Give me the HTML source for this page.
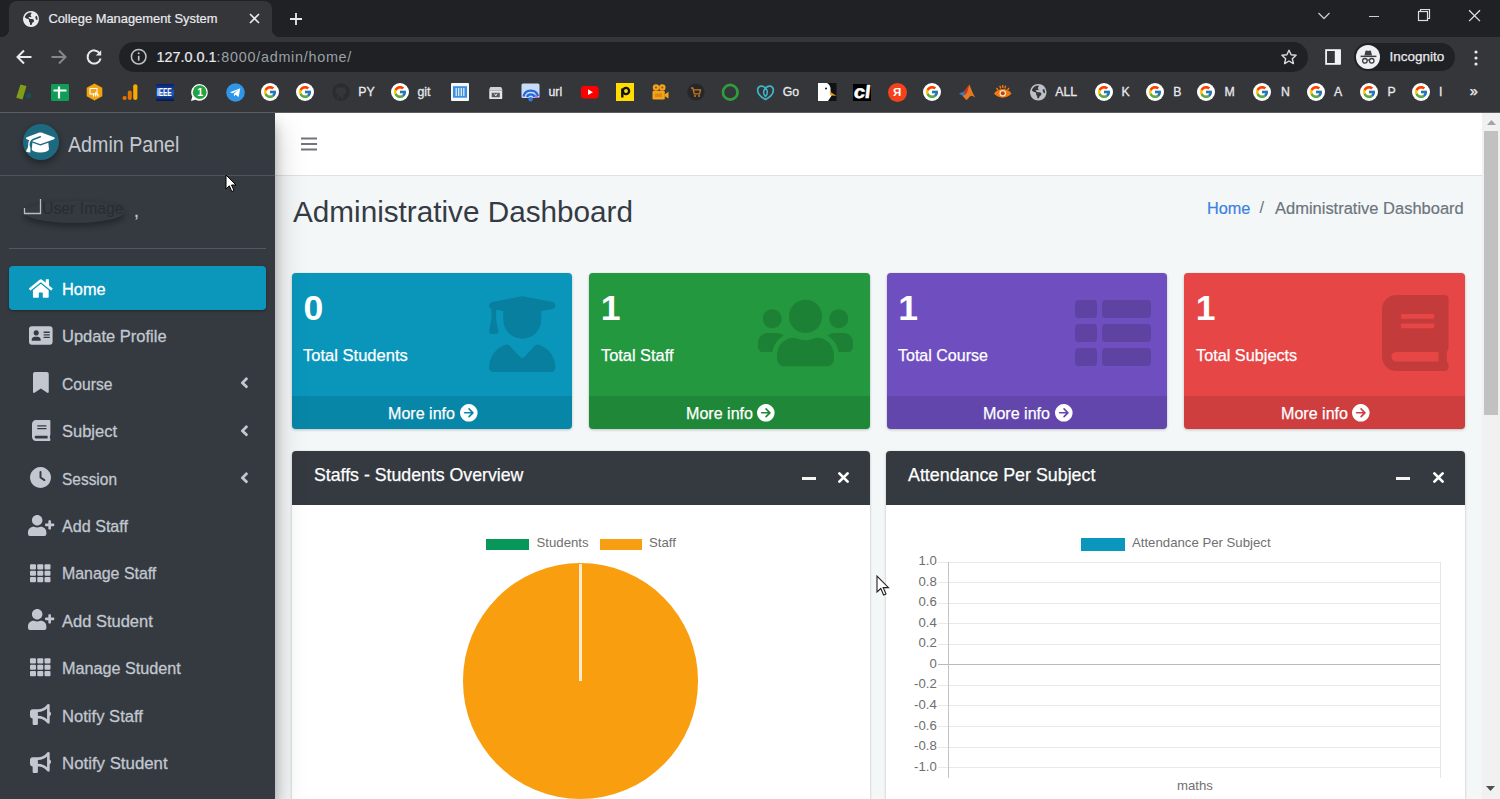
<!DOCTYPE html>
<html lang="en"><head><meta charset="utf-8"><title>College Management System</title>
<style>
*{box-sizing:border-box;margin:0;padding:0}
html,body{width:1500px;height:799px;overflow:hidden;background:#f4f7f8;font-family:"Liberation Sans",sans-serif;position:relative}
.ic{position:absolute;display:block;overflow:visible}
.a{position:absolute;display:block}
.t{position:absolute;white-space:nowrap;line-height:1;display:block}
#chrome{position:absolute;left:0;top:0;width:1500px;height:113px;background:#35363a;z-index:30}
#tabbar{position:absolute;left:0;top:0;width:1500px;height:37px;background:#202124}
#tab{position:absolute;left:9px;top:1px;width:263px;height:36px;background:#35363a;border-radius:8px 8px 0 0}
#omni{position:absolute;left:119px;top:42px;width:1189px;height:30px;border-radius:15px;background:#202124}
#incog{position:absolute;left:1354px;top:43px;width:101px;height:28px;border-radius:14px;background:#202124}
#cline{position:absolute;left:0;top:112px;width:1500px;height:1px;background:#5b5e62}
#sidebar{position:absolute;left:0;top:113px;width:274.600px;height:686px;background:#343a40;z-index:20;box-shadow:0 14px 28px rgba(0,0,0,.25),0 10px 10px rgba(0,0,0,.22)}
#main{position:absolute;left:275px;top:113px;width:1207px;height:686px;background:#f4f7f8;z-index:10;overflow:hidden}
#navbar{position:absolute;left:0;top:0;width:1207px;height:63px;background:#fff;border-bottom:1px solid #dee2e6}
#sbar{position:absolute;left:1482px;top:113px;width:18px;height:686px;background:#f1f1f1;z-index:25}
.box{position:absolute;top:160.300px;width:280.500px;height:156px;border-radius:4px;box-shadow:0 0 1px rgba(0,0,0,.125),0 1px 3px rgba(0,0,0,.2);overflow:hidden}
.box .ft{position:absolute;left:0;bottom:0;width:100%;height:33px;background:rgba(0,0,0,.1)}
.card{position:absolute;top:338px;width:578.500px;height:400px;border-radius:4px;background:#fff;box-shadow:0 0 1px rgba(0,0,0,.125),0 1px 3px rgba(0,0,0,.2);overflow:hidden}
.card .hd{position:absolute;left:0;top:0;width:100%;height:53.500px;background:#343a40}
.nav-act{position:absolute;left:9px;top:153.300px;width:257px;height:44px;border-radius:4px;background:#0b97bc;box-shadow:0 1px 3px rgba(0,0,0,.12),0 1px 2px rgba(0,0,0,.24)}

</style></head>
<body>
<div id="chrome"><div id="tabbar"></div><div id="tab"></div>
<div class="a" style="left:1px;top:29px;width:8px;height:8px;background:radial-gradient(circle at 0 0,#202124 8px,#35363a 8.5px)"></div>
<div class="a" style="left:272px;top:29px;width:8px;height:8px;background:radial-gradient(circle at 100% 0,#202124 8px,#35363a 8.5px)"></div>
<svg class="ic" style="left:23px;top:10.5px;width:16.00px;height:16px" viewBox="0 0 512 512" ><path fill="#e8eaed" d="M58 193 67 209 58 193 67 209Q80 232 105 239L163 256Q190 265 192 294V334Q193 352 208 360Q223 368 224 386V425Q224 437 233 444Q242 450 254 448Q279 439 287 414L289 403Q296 376 320 363L328 358Q351 344 352 316V308Q352 288 338 274L334 270Q320 256 300 256H257Q240 256 225 248L191 228Q184 224 182 217Q177 201 192 192L198 189Q208 184 219 188L242 195Q256 199 264 188Q271 176 263 165L249 149Q234 128 249 108L265 89Q279 72 269 52L266 48Q261 48 256 48Q185 49 132 89Q79 129 58 193ZM464 256Q463 200 438 155L412 165Q400 170 395 181Q390 192 394 205L410 255Q416 272 433 276L462 284Q464 270 464 256ZM0 256Q1 186 34 128Q68 70 128 34Q189 0 256 0Q323 0 384 34Q444 70 478 128Q511 186 512 256Q511 326 478 384Q444 442 384 478Q323 512 256 512Q189 512 128 478Q68 442 34 384Q1 326 0 256Z"/></svg>
<span class="t" style="left:48.4px;top:12.98px;font-size:12.9px;color:#e8eaed;-webkit-text-stroke:.2px #e8eaed;">College Management System</span>
<svg class="ic" style="left:249px;top:13px;width:11px;height:11px" viewBox="0 0 11 11"><path d="M1 1L10 10M10 1L1 10" stroke="#e8eaed" stroke-width="1.6" fill="none"/></svg>
<svg class="ic" style="left:289px;top:11.500px;width:14px;height:14px" viewBox="0 0 14 14"><path d="M7 1V13M1 7H13" stroke="#e8eaed" stroke-width="1.8" fill="none"/></svg>
<svg class="ic" style="left:1316.500px;top:10.500px;width:14px;height:10px" viewBox="0 0 14 10"><path d="M1.500 2L7 7.500L12.500 2" stroke="#c7c8ca" stroke-width="1.3" fill="none"/></svg>
<div class="a" style="left:1368.500px;top:15.500px;width:10.700px;height:1px;background:#d0d1d3"></div>
<svg class="ic" style="left:1417px;top:8.300px;width:14px;height:14px" viewBox="0 0 14 14"><rect x="1.500" y="3.500" width="9" height="9" fill="none" stroke="#dedfe0" stroke-width="1.200"/><path d="M3.500 3.500V1.500H12.500V10.500H10.500" fill="none" stroke="#dedfe0" stroke-width="1.200"/></svg>
<svg class="ic" style="left:1467.400px;top:7.900px;width:15px;height:15px" viewBox="0 0 15 15"><path d="M2.100 2.200L13 13.100M13 2.200L2.100 13.100" stroke="#dedfe0" stroke-width="1.300" fill="none"/></svg>
<svg class="ic" style="left:15px;top:48px;width:18px;height:18px" viewBox="0 0 18 18"><path d="M16.500 9H3M9 2.500L2.500 9L9 15.500" stroke="#e8eaed" stroke-width="2" fill="none"/></svg>
<svg class="ic" style="left:50px;top:48px;width:18px;height:18px" viewBox="0 0 18 18"><path d="M1.500 9H15M9 2.500L15.500 9L9 15.500" stroke="#85878a" stroke-width="2" fill="none"/></svg>
<svg class="ic" style="left:85px;top:48px;width:18px;height:18px" viewBox="0 0 18 18"><path d="M14.600 5.200A6.600 6.600 0 1 0 15.600 10.500" stroke="#e8eaed" stroke-width="2" fill="none"/><path d="M16.200 2.200V7.600H10.800z" fill="#e8eaed"/></svg>
<div id="omni"></div>
<svg class="ic" style="left:129.800px;top:48.400px;width:17.400px;height:17.400px" viewBox="0 0 16 16"><circle cx="8" cy="8" r="6.700" fill="none" stroke="#bfc1c4" stroke-width="1.400"/><path d="M8 7.200V11.600" stroke="#c4c5c7" stroke-width="1.500"/><circle cx="8" cy="4.900" r=".9" fill="#c4c5c7"/></svg>
<span class="t" style="left:156.6px;top:50.11px;font-size:14.4px;color:#e8eaed;-webkit-text-stroke:.2px #e8eaed;">127.0.0.1<span style="color:#9aa0a6;-webkit-text-stroke:0;letter-spacing:.72px">:8000/admin/home/</span></span>
<svg class="ic" style="left:1280px;top:48px;width:18px;height:18px" viewBox="0 0 18 18"><path d="M9 2.200L11.100 6.800L16.100 7.300L12.300 10.700L13.400 15.600L9 13L4.600 15.600L5.700 10.700L1.900 7.300L6.900 6.800z" fill="none" stroke="#dadce0" stroke-width="1.400" stroke-linejoin="round"/></svg>
<svg class="ic" style="left:1325px;top:49px;width:16px;height:16px" viewBox="0 0 16 16"><rect x="1.100" y="1.100" width="13.800" height="13.800" fill="none" stroke="#f1f3f4" stroke-width="1.800"/><rect x="9.800" y="1" width="6" height="14" fill="#f1f3f4"/></svg>
<div id="incog"></div>
<div class="a" style="left:1355.700px;top:44.700px;width:24.800px;height:24.800px;border-radius:50%;background:#eef0f2"></div>
<svg class="ic" style="left:1359px;top:48px;width:18px;height:18px" viewBox="0 0 18 18"><path d="M5.400 7.600L6.400 3.200C6.500 2.600 7.100 2.300 7.600 2.500L9.200 3L10.800 2.500C11.300 2.300 11.900 2.600 12 3.200L13 7.600z" fill="#3c4043"/><rect x="1.600" y="7.600" width="15.800" height="1.500" fill="#3c4043"/><circle cx="5.900" cy="12.800" r="2.300" fill="none" stroke="#3c4043" stroke-width="1.300"/><circle cx="12.700" cy="12.800" r="2.300" fill="none" stroke="#3c4043" stroke-width="1.300"/><path d="M8.200 12.300Q9.300 11.500 10.400 12.300" fill="none" stroke="#3c4043" stroke-width="1.100"/></svg>
<span class="t" style="left:1389.4px;top:50.37px;font-size:13.5px;color:#e8eaed;-webkit-text-stroke:.25px #e8eaed;">Incognito</span>
<svg class="ic" style="left:1474.300px;top:49.700px;width:4px;height:16px" viewBox="0 0 4 16"><circle cx="2" cy="2" r="1.600" fill="#e8eaed"/><circle cx="2" cy="8" r="1.600" fill="#e8eaed"/><circle cx="2" cy="14" r="1.600" fill="#e8eaed"/></svg>
<svg class="ic" style="left:15px;top:83px;width:19px;height:18px" viewBox="0 0 19 18"><path d="M5.500 1.500L11.500 3L7.500 16.500L1.200 14.800z" fill="#7f9d17"/><rect x="11.200" y="10.500" width="5" height="4.600" fill="#12515c"/></svg>
<svg class="ic" style="left:50.500px;top:83.500px;width:18px;height:17px" viewBox="0 0 18 17"><rect width="18" height="17" rx="1.200" fill="#0f9d58"/><path d="M8 2.500V14.500M2.500 6.500H15.500" stroke="#fff" stroke-width="2.200"/></svg>
<svg class="ic" style="left:86px;top:83px;width:17px;height:18px" viewBox="0 0 17 18"><path d="M8.500 .5L16.300 4.800V13.200L8.500 17.500L.7 13.200V4.800z" fill="#f2a30f"/><rect x="4" y="5.500" width="7" height="5.500" fill="none" stroke="#fff" stroke-width="1.100"/><path d="M7.500 13.500V10.500M9.700 13.500V9M11.900 13.500V11" stroke="#fff" stroke-width="1.200"/></svg>
<svg class="ic" style="left:122px;top:83px;width:16px;height:18px" viewBox="0 0 16 18"><circle cx="2.600" cy="15" r="2.100" fill="#e37400"/><rect x="5.800" y="7.500" width="4" height="9.600" rx="2" fill="#e37400"/><rect x="11.200" y="1.200" width="4.200" height="15.900" rx="2.100" fill="#f9ab00"/></svg>
<div class="a" style="left:156px;top:83.500px;width:18px;height:17px;background:linear-gradient(180deg,#0a1f6b,#1d5cc4 55%,#061548)"></div>
<span class="t" style="left:157.1px;top:86.89px;font-size:11px;color:#fff;font-weight:700;letter-spacing:-0.2px;transform:scaleX(.6);transform-origin:0 50%;">IEEE</span>
<svg class="ic" style="left:190px;top:82.500px;width:19px;height:19px" viewBox="0 0 19 19"><path d="M1 18L2.300 13.600A8.300 8.300 0 1 1 5.500 16.700z" fill="#fff"/><circle cx="9.700" cy="9.200" r="6.900" fill="#25a244"/></svg>
<span class="t" style="left:197.2px;top:86.81px;font-size:10.5px;color:#fff;font-weight:700;">1</span>
<svg class="ic" style="left:225.500px;top:82.500px;width:19px;height:19px" viewBox="0 0 19 19"><circle cx="9.500" cy="9.500" r="9.300" fill="#2f96e8"/><path d="M4 9.300L14.300 5.300L12.600 13.900L9.600 11.700L8 13.200L7.800 10.700L12.300 6.700L6.700 10.300z" fill="#fff"/></svg>
<svg class="ic" style="left:261px;top:83px;width:18px;height:18px" viewBox="0 0 48 48"><circle cx="24" cy="24" r="24" fill="#fff"/><g transform="translate(24 24) scale(.8) translate(-24 -24)"><path fill="#FFC107" d="M43.6 20.1H42V20H24v8h11.3c-1.6 4.7-6.1 8-11.3 8-6.6 0-12-5.4-12-12s5.4-12 12-12c3.1 0 5.800 1.200 8 3l5.700-5.700C34 6.100 29.300 4 24 4 13 4 4 13 4 24s9 20 20 20 20-9 20-20c0-1.300-.1-2.700-.4-3.900z"/><path fill="#FF3D00" d="M6.300 14.700l6.600 4.800C14.700 15.100 19 12 24 12c3.100 0 5.800 1.200 8 3l5.700-5.700C34 6.100 29.300 4 24 4 16.300 4 9.700 8.300 6.300 14.700z"/><path fill="#4CAF50" d="M24 44c5.200 0 9.900-2 13.400-5.200l-6.200-5.200C29.200 35.100 26.700 36 24 36c-5.200 0-9.600-3.300-11.300-7.900l-6.500 5C9.500 39.600 16.200 44 24 44z"/><path fill="#1976D2" d="M43.600 20.100H42V20H24v8h11.300c-.8 2.200-2.200 4.200-4.100 5.600l6.200 5.200C37 39.200 44 34 44 24c0-1.300-.1-2.700-.4-3.900z"/></g></svg>
<svg class="ic" style="left:296.3px;top:83px;width:18px;height:18px" viewBox="0 0 48 48"><circle cx="24" cy="24" r="24" fill="#fff"/><g transform="translate(24 24) scale(.8) translate(-24 -24)"><path fill="#FFC107" d="M43.6 20.1H42V20H24v8h11.3c-1.6 4.7-6.1 8-11.3 8-6.6 0-12-5.4-12-12s5.4-12 12-12c3.1 0 5.800 1.200 8 3l5.700-5.700C34 6.100 29.300 4 24 4 13 4 4 13 4 24s9 20 20 20 20-9 20-20c0-1.300-.1-2.700-.4-3.900z"/><path fill="#FF3D00" d="M6.300 14.700l6.600 4.800C14.700 15.100 19 12 24 12c3.100 0 5.800 1.200 8 3l5.700-5.700C34 6.100 29.300 4 24 4 16.300 4 9.700 8.300 6.300 14.700z"/><path fill="#4CAF50" d="M24 44c5.200 0 9.900-2 13.400-5.200l-6.200-5.200C29.200 35.100 26.700 36 24 36c-5.200 0-9.600-3.300-11.300-7.900l-6.500 5C9.500 39.600 16.200 44 24 44z"/><path fill="#1976D2" d="M43.600 20.100H42V20H24v8h11.300c-.8 2.200-2.200 4.200-4.100 5.600l6.200 5.200C37 39.200 44 34 44 24c0-1.300-.1-2.700-.4-3.900z"/></g></svg>
<svg class="ic" style="left:332px;top:83px;width:18px;height:18px" viewBox="0 0 18 18"><circle cx="9" cy="9" r="8.700" fill="#2b2c30"/><path d="M6.800 16.500V13.500C4.500 14 4 12.500 4 12.500M11.200 16.500V13C11.200 12 10.800 11.600 10.800 11.600C13 11.300 14 10.200 14 8.200C14 7.300 13.700 6.600 13.200 6.100C13.300 5.600 13.400 4.900 13.100 4.200C13.100 4.200 12.300 4 10.900 5A7 7 0 0 0 7.100 5C5.700 4 4.900 4.200 4.900 4.200C4.600 4.900 4.700 5.600 4.800 6.100C4.300 6.600 4 7.300 4 8.200C4 10.200 5 11.300 7.200 11.600C7.200 11.600 6.800 12 6.800 12.800" fill="#35363a" stroke="#35363a" stroke-width=".6"/></svg>
<span class="t" style="left:358.3px;top:86.39px;font-size:12.3px;color:#e8eaed;-webkit-text-stroke:.3px #e8eaed;">PY</span>
<svg class="ic" style="left:390.5px;top:83px;width:18px;height:18px" viewBox="0 0 48 48"><circle cx="24" cy="24" r="24" fill="#fff"/><g transform="translate(24 24) scale(.8) translate(-24 -24)"><path fill="#FFC107" d="M43.6 20.1H42V20H24v8h11.3c-1.6 4.7-6.1 8-11.3 8-6.6 0-12-5.4-12-12s5.4-12 12-12c3.1 0 5.800 1.200 8 3l5.700-5.700C34 6.100 29.300 4 24 4 13 4 4 13 4 24s9 20 20 20 20-9 20-20c0-1.300-.1-2.700-.4-3.900z"/><path fill="#FF3D00" d="M6.300 14.700l6.600 4.800C14.700 15.100 19 12 24 12c3.100 0 5.800 1.200 8 3l5.700-5.700C34 6.100 29.300 4 24 4 16.300 4 9.700 8.300 6.300 14.700z"/><path fill="#4CAF50" d="M24 44c5.200 0 9.900-2 13.400-5.200l-6.200-5.200C29.200 35.100 26.700 36 24 36c-5.200 0-9.600-3.300-11.300-7.900l-6.500 5C9.500 39.600 16.200 44 24 44z"/><path fill="#1976D2" d="M43.600 20.100H42V20H24v8h11.300c-.8 2.200-2.200 4.200-4.100 5.600l6.200 5.200C37 39.200 44 34 44 24c0-1.300-.1-2.700-.4-3.900z"/></g></svg>
<span class="t" style="left:417.5px;top:86.39px;font-size:12.3px;color:#e8eaed;-webkit-text-stroke:.3px #e8eaed;">git</span>
<svg class="ic" style="left:451px;top:83px;width:18px;height:18px" viewBox="0 0 18 18"><rect width="18" height="18" rx="1" fill="#f4f8fc"/><rect x="2" y="3.200" width="14" height="11.500" fill="#3d8fe0"/><path d="M5.200 5V13M7.700 5V13M10.300 5V13M12.800 5V13" stroke="#eaf3fb" stroke-width="1.200"/></svg>
<svg class="ic" style="left:488px;top:86px;width:15.500px;height:13.500px" viewBox="0 0 17 15"><path d="M2.500 1H14.500L16.300 5H.7z" fill="#cfd3d8"/><rect x="1.300" y="5" width="14.400" height="9.500" rx="1" fill="#e4e7ea"/><rect x="4" y="7.500" width="9" height="5" fill="#55595f"/><path d="M7 8.500L8.500 11L10 8.500" stroke="#e4e7ea" stroke-width="1.100" fill="none"/></svg>
<svg class="ic" style="left:521px;top:83px;width:19px;height:19px" viewBox="0 0 19 19"><rect x=".5" y=".5" width="18" height="14.500" rx="1.500" fill="#c9dcf7"/><path d="M2.500 13.500A7.500 7.500 0 0 1 17 13" stroke="#2569d8" stroke-width="2.400" fill="none"/><path d="M6 14A4 4 0 0 1 13.500 14" stroke="#2569d8" stroke-width="2.200" fill="none"/><circle cx="9.600" cy="16.200" r="2.200" fill="#2f7be6"/><path d="M14 11L18.500 15H14z" fill="#b46fe0"/></svg>
<span class="t" style="left:548.5px;top:86.39px;font-size:12.3px;color:#e8eaed;-webkit-text-stroke:.3px #e8eaed;">url</span>
<svg class="ic" style="left:581px;top:86px;width:17.600px;height:12.400px" viewBox="0 0 18 13.500" preserveAspectRatio="none"><rect width="18" height="13.500" rx="3.400" fill="#f00"/><path d="M7.200 3.600L12.200 6.750L7.200 9.900z" fill="#fff"/></svg>
<div class="a" style="left:615.500px;top:83px;width:18.500px;height:18px;background:#ffdd00"></div>
<svg class="ic" style="left:615.500px;top:83px;width:18.500px;height:18px" viewBox="0 0 18.500 18"><circle cx="10" cy="8" r="3.100" fill="none" stroke="#111" stroke-width="2.300"/><path d="M6.300 5.500V14.500" stroke="#111" stroke-width="2.400"/></svg>
<svg class="ic" style="left:651px;top:83px;width:18px;height:18px" viewBox="0 0 18 18"><circle cx="5" cy="4.500" r="3.200" fill="#f5a31d"/><circle cx="11.300" cy="4.500" r="3.200" fill="#f5a31d"/><rect x="1.500" y="7.800" width="12.300" height="8.700" rx="1.300" fill="#f5a31d"/><path d="M13.800 11.200L17.500 8.800V15.500L13.800 13.200z" fill="#f5a31d"/><circle cx="5" cy="4.500" r="1.100" fill="#8a5a10"/><circle cx="11.300" cy="4.500" r="1.100" fill="#8a5a10"/><rect x="4" y="10.500" width="7" height="3.500" fill="#d98612"/></svg>
<svg class="ic" style="left:686.500px;top:83px;width:18px;height:18px" viewBox="0 0 18 18"><circle cx="9" cy="9" r="8.600" fill="#26272a"/><path d="M4 5H5.800L7.300 10.800H12.500L13.500 6.800H6.500" stroke="#c87a1a" stroke-width="1.300" fill="none"/><circle cx="8" cy="13" r="1" fill="#c87a1a"/><circle cx="12" cy="13" r="1" fill="#c87a1a"/></svg>
<svg class="ic" style="left:721px;top:83px;width:18.500px;height:18.500px" viewBox="0 0 18.500 18.500"><circle cx="9.250" cy="9.250" r="7.300" fill="none" stroke="#2f9e3c" stroke-width="2.700"/></svg>
<svg class="ic" style="left:756px;top:83.500px;width:19px;height:17px" viewBox="0 0 19 17"><path d="M9.500 15.500C4 12.500 1.200 8.500 1.800 5C2.400 1.800 6.500 .8 9.500 4C12.500 .8 16.600 1.800 17.200 5C17.800 8.500 15 12.500 9.500 15.500z" fill="none" stroke="#3fb6c8" stroke-width="1.700"/><path d="M9.500 4C7 6.500 7 10 9.500 12.500C12 10 12 6.500 9.500 4z" fill="none" stroke="#3fb6c8" stroke-width="1.500"/></svg>
<span class="t" style="left:782.8px;top:86.39px;font-size:12.3px;color:#e8eaed;-webkit-text-stroke:.3px #e8eaed;">Go</span>
<svg class="ic" style="left:818px;top:83px;width:18.500px;height:18px" viewBox="0 0 18.500 18"><rect width="18.500" height="18" fill="#111"/><path d="M0 0H9C12 1.500 13 5 12.500 8L14 12L10 18H0z" fill="#fff"/><path d="M11.500 8.500L18.500 12.800L12.500 12.500z" fill="#e89a1c"/><circle cx="8" cy="5.500" r="1" fill="#111"/></svg>
<div class="a" style="left:852.500px;top:83.500px;width:18.500px;height:17.500px;background:#000"></div>
<span class="t" style="left:853.6px;top:83.06px;font-size:18px;color:#fff;font-weight:700;letter-spacing:-0.3px;transform:scaleX(1.12) skewX(-6deg);transform-origin:0 50%;-webkit-text-stroke:.5px #fff;">cl</span>
<div class="a" style="left:887.500px;top:82.500px;width:19px;height:19px;border-radius:50%;background:#f4431c"></div>
<span class="t" style="left:893px;top:86.57px;font-size:11.5px;color:#fff;font-weight:700;">Я</span>
<svg class="ic" style="left:923.2px;top:83px;width:18px;height:18px" viewBox="0 0 48 48"><circle cx="24" cy="24" r="24" fill="#fff"/><g transform="translate(24 24) scale(.8) translate(-24 -24)"><path fill="#FFC107" d="M43.6 20.1H42V20H24v8h11.3c-1.6 4.7-6.1 8-11.3 8-6.6 0-12-5.4-12-12s5.4-12 12-12c3.1 0 5.800 1.200 8 3l5.700-5.700C34 6.100 29.300 4 24 4 13 4 4 13 4 24s9 20 20 20 20-9 20-20c0-1.300-.1-2.700-.4-3.900z"/><path fill="#FF3D00" d="M6.300 14.700l6.600 4.800C14.700 15.100 19 12 24 12c3.100 0 5.800 1.200 8 3l5.700-5.700C34 6.100 29.300 4 24 4 16.300 4 9.700 8.300 6.300 14.700z"/><path fill="#4CAF50" d="M24 44c5.200 0 9.900-2 13.400-5.200l-6.200-5.200C29.200 35.100 26.700 36 24 36c-5.200 0-9.600-3.300-11.300-7.900l-6.500 5C9.500 39.600 16.200 44 24 44z"/><path fill="#1976D2" d="M43.600 20.100H42V20H24v8h11.300c-.8 2.200-2.200 4.200-4.100 5.600l6.200 5.200C37 39.200 44 34 44 24c0-1.300-.1-2.700-.4-3.900z"/></g></svg>
<svg class="ic" style="left:958px;top:83px;width:18px;height:18px" viewBox="0 0 18 18"><path d="M1 10.500L5.500 8.500L8 11L4.500 12.800z" fill="#3b78c4"/><path d="M5.500 8.500C8 6.500 9.500 3 11.300 1.500L12.500 9L8 11z" fill="#c0392b"/><path d="M11.300 1.500C13 5 14.500 10.500 17.300 14.500C15 13.500 13.500 12 12 13.500C10.500 15 9.500 16.500 8.200 17L4.500 12.800L8 11C10 8.500 10.500 4.500 11.300 1.500z" fill="#e8791e"/></svg>
<svg class="ic" style="left:992.500px;top:83px;width:19.500px;height:18px" viewBox="0 0 19.500 18"><path d="M1 10.500C5 4.500 14.500 4.500 18.500 10.500C14.500 16 5 16 1 10.500z" fill="#ee7a10"/><circle cx="9.750" cy="10.300" r="3.300" fill="#fbe3c0"/><circle cx="9.750" cy="10.300" r="2" fill="#c43d0d"/><path d="M3.500 5L5 7M6.800 2.800L7.800 5.500M9.750 2V5M12.700 2.800L11.700 5.500M16 5L14.500 7" stroke="#ee7a10" stroke-width="1.400"/></svg>
<svg class="ic" style="left:1029.5px;top:84px;width:16.50px;height:16.5px" viewBox="0 0 512 512" ><path fill="#bdc1c6" d="M58 193 67 209 58 193 67 209Q80 232 105 239L163 256Q190 265 192 294V334Q193 352 208 360Q223 368 224 386V425Q224 437 233 444Q242 450 254 448Q279 439 287 414L289 403Q296 376 320 363L328 358Q351 344 352 316V308Q352 288 338 274L334 270Q320 256 300 256H257Q240 256 225 248L191 228Q184 224 182 217Q177 201 192 192L198 189Q208 184 219 188L242 195Q256 199 264 188Q271 176 263 165L249 149Q234 128 249 108L265 89Q279 72 269 52L266 48Q261 48 256 48Q185 49 132 89Q79 129 58 193ZM464 256Q463 200 438 155L412 165Q400 170 395 181Q390 192 394 205L410 255Q416 272 433 276L462 284Q464 270 464 256ZM0 256Q1 186 34 128Q68 70 128 34Q189 0 256 0Q323 0 384 34Q444 70 478 128Q511 186 512 256Q511 326 478 384Q444 442 384 478Q323 512 256 512Q189 512 128 478Q68 442 34 384Q1 326 0 256Z"/></svg>
<span class="t" style="left:1055.3px;top:86.39px;font-size:12.3px;color:#e8eaed;-webkit-text-stroke:.3px #e8eaed;">ALL</span>
<svg class="ic" style="left:1094.5px;top:83px;width:18px;height:18px" viewBox="0 0 48 48"><circle cx="24" cy="24" r="24" fill="#fff"/><g transform="translate(24 24) scale(.8) translate(-24 -24)"><path fill="#FFC107" d="M43.6 20.1H42V20H24v8h11.3c-1.6 4.7-6.1 8-11.3 8-6.6 0-12-5.4-12-12s5.4-12 12-12c3.1 0 5.800 1.200 8 3l5.700-5.700C34 6.100 29.300 4 24 4 13 4 4 13 4 24s9 20 20 20 20-9 20-20c0-1.300-.1-2.700-.4-3.900z"/><path fill="#FF3D00" d="M6.300 14.700l6.600 4.800C14.700 15.100 19 12 24 12c3.100 0 5.800 1.200 8 3l5.700-5.700C34 6.100 29.300 4 24 4 16.300 4 9.700 8.300 6.300 14.700z"/><path fill="#4CAF50" d="M24 44c5.200 0 9.900-2 13.400-5.200l-6.200-5.200C29.200 35.100 26.700 36 24 36c-5.200 0-9.600-3.300-11.300-7.900l-6.500 5C9.500 39.600 16.200 44 24 44z"/><path fill="#1976D2" d="M43.600 20.100H42V20H24v8h11.300c-.8 2.200-2.200 4.200-4.100 5.600l6.200 5.200C37 39.200 44 34 44 24c0-1.300-.1-2.700-.4-3.900z"/></g></svg>
<span class="t" style="left:1121.4px;top:86.39px;font-size:12.3px;color:#e8eaed;-webkit-text-stroke:.3px #e8eaed;">K</span>
<svg class="ic" style="left:1145.8px;top:83px;width:18px;height:18px" viewBox="0 0 48 48"><circle cx="24" cy="24" r="24" fill="#fff"/><g transform="translate(24 24) scale(.8) translate(-24 -24)"><path fill="#FFC107" d="M43.6 20.1H42V20H24v8h11.3c-1.6 4.7-6.1 8-11.3 8-6.6 0-12-5.4-12-12s5.4-12 12-12c3.1 0 5.800 1.200 8 3l5.700-5.700C34 6.100 29.300 4 24 4 13 4 4 13 4 24s9 20 20 20 20-9 20-20c0-1.300-.1-2.700-.4-3.900z"/><path fill="#FF3D00" d="M6.300 14.700l6.600 4.800C14.700 15.100 19 12 24 12c3.100 0 5.800 1.200 8 3l5.700-5.700C34 6.100 29.300 4 24 4 16.300 4 9.700 8.300 6.300 14.700z"/><path fill="#4CAF50" d="M24 44c5.200 0 9.900-2 13.400-5.200l-6.200-5.200C29.200 35.100 26.700 36 24 36c-5.200 0-9.600-3.300-11.300-7.900l-6.500 5C9.500 39.600 16.200 44 24 44z"/><path fill="#1976D2" d="M43.600 20.100H42V20H24v8h11.300c-.8 2.200-2.200 4.200-4.100 5.600l6.200 5.200C37 39.200 44 34 44 24c0-1.300-.1-2.700-.4-3.900z"/></g></svg>
<span class="t" style="left:1173.2px;top:86.39px;font-size:12.3px;color:#e8eaed;-webkit-text-stroke:.3px #e8eaed;">B</span>
<svg class="ic" style="left:1197.4px;top:83px;width:18px;height:18px" viewBox="0 0 48 48"><circle cx="24" cy="24" r="24" fill="#fff"/><g transform="translate(24 24) scale(.8) translate(-24 -24)"><path fill="#FFC107" d="M43.6 20.1H42V20H24v8h11.3c-1.6 4.7-6.1 8-11.3 8-6.6 0-12-5.4-12-12s5.4-12 12-12c3.1 0 5.800 1.200 8 3l5.700-5.700C34 6.100 29.300 4 24 4 13 4 4 13 4 24s9 20 20 20 20-9 20-20c0-1.300-.1-2.700-.4-3.900z"/><path fill="#FF3D00" d="M6.300 14.700l6.600 4.800C14.700 15.100 19 12 24 12c3.100 0 5.800 1.200 8 3l5.700-5.700C34 6.100 29.300 4 24 4 16.300 4 9.700 8.300 6.300 14.700z"/><path fill="#4CAF50" d="M24 44c5.200 0 9.900-2 13.400-5.200l-6.200-5.200C29.200 35.100 26.700 36 24 36c-5.200 0-9.600-3.300-11.300-7.900l-6.500 5C9.500 39.600 16.200 44 24 44z"/><path fill="#1976D2" d="M43.600 20.100H42V20H24v8h11.300c-.8 2.200-2.200 4.200-4.100 5.600l6.200 5.200C37 39.200 44 34 44 24c0-1.300-.1-2.700-.4-3.900z"/></g></svg>
<span class="t" style="left:1224.6px;top:86.39px;font-size:12.3px;color:#e8eaed;-webkit-text-stroke:.3px #e8eaed;">M</span>
<svg class="ic" style="left:1253.4px;top:83px;width:18px;height:18px" viewBox="0 0 48 48"><circle cx="24" cy="24" r="24" fill="#fff"/><g transform="translate(24 24) scale(.8) translate(-24 -24)"><path fill="#FFC107" d="M43.6 20.1H42V20H24v8h11.3c-1.6 4.7-6.1 8-11.3 8-6.6 0-12-5.4-12-12s5.4-12 12-12c3.1 0 5.800 1.200 8 3l5.700-5.700C34 6.100 29.300 4 24 4 13 4 4 13 4 24s9 20 20 20 20-9 20-20c0-1.300-.1-2.700-.4-3.900z"/><path fill="#FF3D00" d="M6.300 14.700l6.600 4.800C14.700 15.100 19 12 24 12c3.100 0 5.800 1.200 8 3l5.700-5.700C34 6.100 29.300 4 24 4 16.300 4 9.700 8.300 6.300 14.700z"/><path fill="#4CAF50" d="M24 44c5.200 0 9.900-2 13.400-5.200l-6.200-5.200C29.200 35.100 26.700 36 24 36c-5.200 0-9.600-3.300-11.300-7.900l-6.500 5C9.500 39.600 16.200 44 24 44z"/><path fill="#1976D2" d="M43.600 20.100H42V20H24v8h11.300c-.8 2.200-2.200 4.200-4.100 5.600l6.200 5.200C37 39.200 44 34 44 24c0-1.300-.1-2.700-.4-3.900z"/></g></svg>
<span class="t" style="left:1281px;top:86.39px;font-size:12.3px;color:#e8eaed;-webkit-text-stroke:.3px #e8eaed;">N</span>
<svg class="ic" style="left:1307px;top:83px;width:18px;height:18px" viewBox="0 0 48 48"><circle cx="24" cy="24" r="24" fill="#fff"/><g transform="translate(24 24) scale(.8) translate(-24 -24)"><path fill="#FFC107" d="M43.6 20.1H42V20H24v8h11.3c-1.6 4.7-6.1 8-11.3 8-6.6 0-12-5.4-12-12s5.4-12 12-12c3.1 0 5.800 1.200 8 3l5.700-5.700C34 6.100 29.300 4 24 4 13 4 4 13 4 24s9 20 20 20 20-9 20-20c0-1.300-.1-2.700-.4-3.900z"/><path fill="#FF3D00" d="M6.300 14.700l6.600 4.800C14.700 15.100 19 12 24 12c3.100 0 5.800 1.200 8 3l5.700-5.700C34 6.100 29.300 4 24 4 16.300 4 9.700 8.300 6.300 14.700z"/><path fill="#4CAF50" d="M24 44c5.200 0 9.900-2 13.400-5.200l-6.200-5.200C29.200 35.100 26.700 36 24 36c-5.200 0-9.600-3.300-11.300-7.900l-6.500 5C9.500 39.600 16.200 44 24 44z"/><path fill="#1976D2" d="M43.600 20.100H42V20H24v8h11.300c-.8 2.200-2.200 4.200-4.100 5.600l6.200 5.200C37 39.200 44 34 44 24c0-1.300-.1-2.700-.4-3.900z"/></g></svg>
<span class="t" style="left:1334px;top:86.39px;font-size:12.3px;color:#e8eaed;-webkit-text-stroke:.3px #e8eaed;">A</span>
<svg class="ic" style="left:1360.2px;top:83px;width:18px;height:18px" viewBox="0 0 48 48"><circle cx="24" cy="24" r="24" fill="#fff"/><g transform="translate(24 24) scale(.8) translate(-24 -24)"><path fill="#FFC107" d="M43.6 20.1H42V20H24v8h11.3c-1.6 4.7-6.1 8-11.3 8-6.6 0-12-5.4-12-12s5.4-12 12-12c3.1 0 5.800 1.200 8 3l5.700-5.700C34 6.100 29.300 4 24 4 13 4 4 13 4 24s9 20 20 20 20-9 20-20c0-1.300-.1-2.700-.4-3.900z"/><path fill="#FF3D00" d="M6.300 14.700l6.600 4.800C14.700 15.100 19 12 24 12c3.100 0 5.800 1.200 8 3l5.700-5.700C34 6.100 29.300 4 24 4 16.300 4 9.700 8.300 6.300 14.700z"/><path fill="#4CAF50" d="M24 44c5.200 0 9.900-2 13.400-5.200l-6.200-5.200C29.200 35.100 26.700 36 24 36c-5.200 0-9.600-3.300-11.300-7.900l-6.500 5C9.500 39.600 16.200 44 24 44z"/><path fill="#1976D2" d="M43.600 20.100H42V20H24v8h11.300c-.8 2.200-2.200 4.200-4.100 5.600l6.200 5.200C37 39.200 44 34 44 24c0-1.300-.1-2.700-.4-3.900z"/></g></svg>
<span class="t" style="left:1387.6px;top:86.39px;font-size:12.3px;color:#e8eaed;-webkit-text-stroke:.3px #e8eaed;">P</span>
<svg class="ic" style="left:1411.8px;top:83px;width:18px;height:18px" viewBox="0 0 48 48"><circle cx="24" cy="24" r="24" fill="#fff"/><g transform="translate(24 24) scale(.8) translate(-24 -24)"><path fill="#FFC107" d="M43.6 20.1H42V20H24v8h11.3c-1.6 4.7-6.1 8-11.3 8-6.6 0-12-5.4-12-12s5.4-12 12-12c3.1 0 5.800 1.200 8 3l5.700-5.700C34 6.100 29.300 4 24 4 13 4 4 13 4 24s9 20 20 20 20-9 20-20c0-1.300-.1-2.700-.4-3.900z"/><path fill="#FF3D00" d="M6.300 14.700l6.600 4.800C14.700 15.100 19 12 24 12c3.100 0 5.800 1.200 8 3l5.700-5.700C34 6.100 29.300 4 24 4 16.300 4 9.700 8.300 6.300 14.700z"/><path fill="#4CAF50" d="M24 44c5.200 0 9.900-2 13.400-5.200l-6.200-5.200C29.200 35.100 26.700 36 24 36c-5.200 0-9.600-3.300-11.300-7.900l-6.500 5C9.500 39.600 16.200 44 24 44z"/><path fill="#1976D2" d="M43.600 20.100H42V20H24v8h11.300c-.8 2.200-2.200 4.200-4.100 5.600l6.200 5.200C37 39.200 44 34 44 24c0-1.300-.1-2.700-.4-3.900z"/></g></svg>
<span class="t" style="left:1439px;top:86.39px;font-size:12.3px;color:#e8eaed;-webkit-text-stroke:.3px #e8eaed;">I</span>
<span class="t" style="left:1469.8px;top:84.33px;font-size:14.5px;color:#e8eaed;-webkit-text-stroke:.4px #e8eaed;">»</span>
<div id="cline"></div>
</div>
<div id="sidebar">
<div class="a" style="left:23px;top:11px;width:36px;height:36px;border-radius:50%;background:#1d6a80;box-shadow:0 3px 6px rgba(0,0,0,.16),0 3px 6px rgba(0,0,0,.23)"></div>
<svg class="ic" style="left:26.12px;top:18.0px;width:28.75px;height:23px" viewBox="0 0 640 512" ><path fill="#fff" d="M320 32Q308 32 296 36L16 137Q1 144 0 160Q1 176 16 183L74 204Q49 243 48 292V320Q45 364 26 401Q16 420 3 438Q-2 445 1 453Q4 461 12 464L76 480Q83 481 89 478Q94 474 96 467Q106 401 94 359Q89 337 80 317V292Q81 246 108 210Q127 187 157 175L314 113Q328 109 335 122Q339 136 326 143L169 204Q150 212 137 226L296 284Q308 288 320 288Q332 288 344 284L624 183Q639 176 640 160Q639 144 624 137L344 36Q332 32 320 32ZM128 408Q130 436 184 457Q238 479 320 480Q402 479 456 457Q510 436 512 408L497 263L355 314Q338 320 320 320Q302 320 286 314L143 263L128 408Z"/></svg>
<span class="t" style="transform:scaleX(0.8930);transform-origin:0 50%;left:67.6px;top:20.68px;font-size:22px;color:#c5c9cf;">Admin Panel</span>
<div class="a" style="left:0;top:62px;width:275px;height:1px;background:#4b545c"></div>
<div class="a" style="left:24px;top:88px;width:100px;height:22px;border-radius:50%;box-shadow:0 3px 6px rgba(0,0,0,.16),0 3px 6px rgba(0,0,0,.23)"></div>
<svg class="ic" style="left:23px;top:85px;width:19px;height:17px" viewBox="0 0 19 17"><path d="M1.500 10V15.500H17.500V1" stroke="#b9bdc3" stroke-width="1.300" fill="none"/></svg>
<span class="t" style="left:42px;top:88.13px;font-size:15.8px;color:#272c32;">User Image</span>
<span class="t" style="left:133.5px;top:85.72px;font-size:21px;color:#c2c7d0;">,</span>
<div class="a" style="left:9px;top:135px;width:257px;height:1px;background:#4f5962"></div>
<div class="nav-act"></div>
<svg class="ic" style="left:28.89px;top:164.5px;width:23.62px;height:21px" viewBox="0 0 576 512" ><path fill="#fff" d="M280.37 148.26L96 300.11V464a16 16 0 0 0 16 16l112.060-.29a16 16 0 0 0 15.920-16V368a16 16 0 0 1 16-16h64a16 16 0 0 1 16 16v95.640a16 16 0 0 0 16 16.050L464 480a16 16 0 0 0 16-16V300L295.670 148.260a12.190 12.190 0 0 0-15.300 0zM571.600 251.470L488 182.560V44.050a12 12 0 0 0-12-12h-56a12 12 0 0 0-12 12v72.610L318.470 43a48 48 0 0 0-61 0L4.340 251.470a12 12 0 0 0-1.600 16.900l25.500 31A12 12 0 0 0 45.150 301l235.220-193.740a12.190 12.190 0 0 1 15.300 0L530.900 301a12 12 0 0 0 16.900-1.600l25.500-31a12 12 0 0 0-1.700-16.930z"/></svg>
<span class="t" style="transform:scaleX(0.9507);transform-origin:0 50%;left:62px;top:167.94px;font-size:17.2px;color:#fff;-webkit-text-stroke:.3px #fff;">Home</span>
<svg class="ic" style="left:28.89px;top:211.9px;width:23.62px;height:21px" viewBox="0 0 576 512" ><path fill="#c2c7d0" d="M64 32Q37 33 19 51Q1 69 0 96V416Q1 443 19 461Q37 479 64 480H512Q539 479 557 461Q575 443 576 416V96Q575 69 557 51Q539 33 512 32H64ZM144 288H208H144H208Q242 289 265 311Q287 334 288 368Q287 383 272 384H80Q65 383 64 368Q65 334 87 311Q110 289 144 288ZM112 192Q113 156 144 137Q176 119 208 137Q239 156 240 192Q239 228 208 247Q176 265 144 247Q113 228 112 192ZM368 160H496H368H496Q511 161 512 176Q511 191 496 192H368Q353 191 352 176Q353 161 368 160ZM368 224H496H368H496Q511 225 512 240Q511 255 496 256H368Q353 255 352 240Q353 225 368 224ZM368 288H496H368H496Q511 289 512 304Q511 319 496 320H368Q353 319 352 304Q353 289 368 288Z"/></svg>
<span class="t" style="transform:scaleX(0.9603);transform-origin:0 50%;left:62px;top:215.34px;font-size:17.2px;color:#c2c7d0;-webkit-text-stroke:.3px #c2c7d0;">Update Profile</span>
<svg class="ic" style="left:32.83px;top:259.3px;width:15.75px;height:21px" viewBox="0 0 384 512" ><path fill="#c2c7d0" d="M0 48V488V48V488Q2 510 24 512Q32 512 38 508L192 400L346 508Q352 512 360 512Q382 510 384 488V48Q383 28 370 14Q356 1 336 0H48Q28 1 14 14Q1 28 0 48Z"/></svg>
<span class="t" style="transform:scaleX(0.9096);transform-origin:0 50%;left:62px;top:262.74px;font-size:17.2px;color:#c2c7d0;-webkit-text-stroke:.3px #c2c7d0;">Course</span>
<svg class="ic" style="left:239.6px;top:261.4px;width:8.80px;height:17.6px" viewBox="0 0 256 512" ><path fill="#c2c7d0" d="M31.700 239l136-136c9.400-9.400 24.600-9.400 33.900 0l22.600 22.600c9.400 9.400 9.400 24.600 0 33.900L127.900 256l96.400 96.400c9.400 9.400 9.400 24.600 0 33.900L201.700 409c-9.400 9.400-24.600 9.400-33.900 0l-136-136c-9.500-9.400-9.500-24.600-.1-34z"/></svg>
<svg class="ic" style="left:31.51px;top:306.7px;width:18.38px;height:21px" viewBox="0 0 448 512" ><path fill="#c2c7d0" d="M448 360V24c0-13.300-10.700-24-24-24H96C43 0 0 43 0 96v320c0 53 43 96 96 96h328c13.300 0 24-10.700 24-24v-16c0-7.500-3.500-14.300-8.900-18.700-4.200-15.400-4.200-59.300 0-74.700 5.400-4.300 8.900-11.100 8.900-18.600zM128 134c0-3.300 2.700-6 6-6h212c3.300 0 6 2.700 6 6v20c0 3.300-2.700 6-6 6H134c-3.300 0-6-2.700-6-6v-20zm0 64c0-3.300 2.700-6 6-6h212c3.300 0 6 2.700 6 6v20c0 3.300-2.700 6-6 6H134c-3.300 0-6-2.700-6-6v-20zm253.400 250H96c-17.700 0-32-14.300-32-32 0-17.600 14.400-32 32-32h285.400c-1.900 17.100-1.900 46.900 0 64z"/></svg>
<span class="t" style="transform:scaleX(0.9594);transform-origin:0 50%;left:62px;top:310.14px;font-size:17.2px;color:#c2c7d0;-webkit-text-stroke:.3px #c2c7d0;">Subject</span>
<svg class="ic" style="left:239.6px;top:308.8px;width:8.80px;height:17.6px" viewBox="0 0 256 512" ><path fill="#c2c7d0" d="M31.700 239l136-136c9.400-9.400 24.600-9.400 33.900 0l22.600 22.600c9.400 9.400 9.400 24.600 0 33.900L127.900 256l96.400 96.400c9.400 9.400 9.400 24.600 0 33.900L201.700 409c-9.400 9.400-24.600 9.400-33.900 0l-136-136c-9.500-9.400-9.500-24.600-.1-34z"/></svg>
<svg class="ic" style="left:30.2px;top:354.1px;width:21.00px;height:21px" viewBox="0 0 512 512" ><path fill="#c2c7d0" d="M256 0Q326 1 384 34Q442 68 478 128Q512 189 512 256Q512 323 478 384Q442 444 384 478Q326 511 256 512Q186 511 128 478Q70 444 34 384Q0 323 0 256Q0 189 34 128Q70 68 128 34Q186 1 256 0ZM232 120V256V120V256Q232 269 243 276L339 340Q358 351 372 333Q383 314 365 300L280 243V120Q278 98 256 96Q234 98 232 120Z"/></svg>
<span class="t" style="transform:scaleX(0.8993);transform-origin:0 50%;left:62px;top:357.54px;font-size:17.2px;color:#c2c7d0;-webkit-text-stroke:.3px #c2c7d0;">Session</span>
<svg class="ic" style="left:239.6px;top:356.2px;width:8.80px;height:17.6px" viewBox="0 0 256 512" ><path fill="#c2c7d0" d="M31.700 239l136-136c9.400-9.400 24.600-9.400 33.900 0l22.600 22.600c9.400 9.400 9.400 24.600 0 33.900L127.900 256l96.400 96.400c9.400 9.400 9.400 24.600 0 33.900L201.700 409c-9.400 9.400-24.600 9.400-33.900 0l-136-136c-9.500-9.400-9.500-24.600-.1-34z"/></svg>
<svg class="ic" style="left:27.58px;top:401.5px;width:26.25px;height:21px" viewBox="0 0 640 512" ><path fill="#c2c7d0" d="M624 208h-64v-64c0-8.800-7.200-16-16-16h-32c-8.800 0-16 7.200-16 16v64h-64c-8.800 0-16 7.200-16 16v32c0 8.800 7.200 16 16 16h64v64c0 8.800 7.200 16 16 16h32c8.800 0 16-7.200 16-16v-64h64c8.800 0 16-7.200 16-16v-32c0-8.800-7.200-16-16-16zm-400 48c70.700 0 128-57.300 128-128S294.700 0 224 0 96 57.300 96 128s57.300 128 128 128zm89.600 32h-16.700c-22.200 10.200-46.900 16-72.900 16s-50.600-5.800-72.900-16h-16.700C60.200 288 0 348.200 0 422.400V464c0 26.500 21.500 48 48 48h352c26.500 0 48-21.500 48-48v-41.600c0-74.200-60.200-134.400-134.400-134.400z"/></svg>
<span class="t" style="transform:scaleX(0.9374);transform-origin:0 50%;left:62px;top:404.94px;font-size:17.2px;color:#c2c7d0;-webkit-text-stroke:.3px #c2c7d0;">Add Staff</span>
<svg class="ic" style="left:30.45px;top:449.65px;width:20.5px;height:20.5px" viewBox="0 0 512 512"><rect x="0" y="32" width="149.300" height="128" rx="24" fill="#c2c7d0"/><rect x="181.3" y="32" width="149.300" height="128" rx="24" fill="#c2c7d0"/><rect x="362.7" y="32" width="149.300" height="128" rx="24" fill="#c2c7d0"/><rect x="0" y="192" width="149.300" height="128" rx="24" fill="#c2c7d0"/><rect x="181.3" y="192" width="149.300" height="128" rx="24" fill="#c2c7d0"/><rect x="362.7" y="192" width="149.300" height="128" rx="24" fill="#c2c7d0"/><rect x="0" y="352" width="149.300" height="128" rx="24" fill="#c2c7d0"/><rect x="181.3" y="352" width="149.300" height="128" rx="24" fill="#c2c7d0"/><rect x="362.7" y="352" width="149.300" height="128" rx="24" fill="#c2c7d0"/></svg>
<span class="t" style="transform:scaleX(0.9251);transform-origin:0 50%;left:62px;top:452.34px;font-size:17.2px;color:#c2c7d0;-webkit-text-stroke:.3px #c2c7d0;">Manage Staff</span>
<svg class="ic" style="left:27.58px;top:496.3px;width:26.25px;height:21px" viewBox="0 0 640 512" ><path fill="#c2c7d0" d="M624 208h-64v-64c0-8.800-7.200-16-16-16h-32c-8.800 0-16 7.200-16 16v64h-64c-8.800 0-16 7.200-16 16v32c0 8.800 7.200 16 16 16h64v64c0 8.800 7.200 16 16 16h32c8.800 0 16-7.200 16-16v-64h64c8.800 0 16-7.200 16-16v-32c0-8.800-7.200-16-16-16zm-400 48c70.700 0 128-57.300 128-128S294.700 0 224 0 96 57.300 96 128s57.300 128 128 128zm89.600 32h-16.700c-22.200 10.200-46.900 16-72.900 16s-50.600-5.800-72.900-16h-16.700C60.200 288 0 348.200 0 422.400V464c0 26.500 21.500 48 48 48h352c26.500 0 48-21.500 48-48v-41.600c0-74.200-60.200-134.400-134.400-134.400z"/></svg>
<span class="t" style="transform:scaleX(0.9597);transform-origin:0 50%;left:62px;top:499.74px;font-size:17.2px;color:#c2c7d0;-webkit-text-stroke:.3px #c2c7d0;">Add Student</span>
<svg class="ic" style="left:30.45px;top:544.45px;width:20.5px;height:20.5px" viewBox="0 0 512 512"><rect x="0" y="32" width="149.300" height="128" rx="24" fill="#c2c7d0"/><rect x="181.3" y="32" width="149.300" height="128" rx="24" fill="#c2c7d0"/><rect x="362.7" y="32" width="149.300" height="128" rx="24" fill="#c2c7d0"/><rect x="0" y="192" width="149.300" height="128" rx="24" fill="#c2c7d0"/><rect x="181.3" y="192" width="149.300" height="128" rx="24" fill="#c2c7d0"/><rect x="362.7" y="192" width="149.300" height="128" rx="24" fill="#c2c7d0"/><rect x="0" y="352" width="149.300" height="128" rx="24" fill="#c2c7d0"/><rect x="181.3" y="352" width="149.300" height="128" rx="24" fill="#c2c7d0"/><rect x="362.7" y="352" width="149.300" height="128" rx="24" fill="#c2c7d0"/></svg>
<span class="t" style="transform:scaleX(0.9410);transform-origin:0 50%;left:62px;top:547.14px;font-size:17.2px;color:#c2c7d0;-webkit-text-stroke:.3px #c2c7d0;">Manage Student</span>
<svg class="ic" style="left:30.2px;top:591.1px;width:21.00px;height:21px" viewBox="0 0 512 512" ><path fill="#c2c7d0" d="M480 32Q479 11 460 2Q441 -5 425 9L382 53Q345 89 299 109Q252 128 201 128H192H64Q37 129 19 147Q1 165 0 192V288Q1 315 19 333Q37 351 64 352V480Q64 494 73 503Q82 512 96 512H160Q174 512 183 503Q192 494 192 480V352H201Q252 352 299 372Q345 391 382 427L425 471Q441 485 460 478Q479 469 480 448V300Q494 293 503 277Q512 261 512 240Q512 219 503 203Q494 187 480 180V32ZM416 109V240V109V240V371Q371 331 316 310Q261 288 201 288H192V192H201Q261 192 316 170Q371 149 416 109Z"/></svg>
<span class="t" style="transform:scaleX(0.9660);transform-origin:0 50%;left:62px;top:594.54px;font-size:17.2px;color:#c2c7d0;-webkit-text-stroke:.3px #c2c7d0;">Notify Staff</span>
<svg class="ic" style="left:30.2px;top:638.5px;width:21.00px;height:21px" viewBox="0 0 512 512" ><path fill="#c2c7d0" d="M480 32Q479 11 460 2Q441 -5 425 9L382 53Q345 89 299 109Q252 128 201 128H192H64Q37 129 19 147Q1 165 0 192V288Q1 315 19 333Q37 351 64 352V480Q64 494 73 503Q82 512 96 512H160Q174 512 183 503Q192 494 192 480V352H201Q252 352 299 372Q345 391 382 427L425 471Q441 485 460 478Q479 469 480 448V300Q494 293 503 277Q512 261 512 240Q512 219 503 203Q494 187 480 180V32ZM416 109V240V109V240V371Q371 331 316 310Q261 288 201 288H192V192H201Q261 192 316 170Q371 149 416 109Z"/></svg>
<span class="t" style="transform:scaleX(0.9781);transform-origin:0 50%;left:62px;top:641.94px;font-size:17.2px;color:#c2c7d0;-webkit-text-stroke:.3px #c2c7d0;">Notify Student</span>
</div>
<svg class="ic" style="left:225px;top:174px;width:12px;height:19px;z-index:40" viewBox="0 0 12 19"><path d="M1 1V15L4.300 11.800L6.800 17.500L9 16.500L6.500 11H11z" fill="#fff" stroke="#000" stroke-width="1"/></svg>
<div id="main">
<div id="navbar"></div>
<svg class="ic" style="left:25.5px;top:23.5px;width:16px;height:14px" viewBox="0 0 16 14"><path d="M0 1.500H16M0 7H16M0 12.500H16" stroke="#72757a" stroke-width="2"/></svg>
<span class="t" style="transform:scaleX(1.0104);transform-origin:0 50%;left:17.5px;top:83.61px;font-size:29.4px;color:#353b44;">Administrative Dashboard</span>
<span class="t" style="transform:scaleX(0.9464);transform-origin:0 50%;left:932px;top:86.84px;font-size:17.2px;color:#3a82e0;-webkit-text-stroke:.2px #3a82e0;">Home</span>
<span class="t" style="left:984.5px;top:87.35px;font-size:16.6px;color:#6c757d;">/</span>
<span class="t" style="transform:scaleX(0.9589);transform-origin:0 50%;left:999.8px;top:86.84px;font-size:17.2px;color:#6c757d;-webkit-text-stroke:.2px #6c757d;">Administrative Dashboard</span>
<div class="box" style="left:16.69999999999999px;background:#0a96bb">
<span class="t" style="left:11.800000000000011px;top:17.76px;font-size:35.6px;color:#fff;font-weight:700;">0</span>
<span class="t" style="transform:scaleX(0.9620);transform-origin:0 50%;left:11.800000000000011px;top:73.44px;font-size:17.2px;color:#fff;-webkit-text-stroke:.25px #fff;">Total Students</span>
<svg class="ic" style="left:197.25px;top:22.5px;width:66.50px;height:76px" viewBox="0 0 448 512" ><path fill="rgba(0,0,0,.15)" d="M219 1Q224 0 229 1L429 41Q447 45 448 64Q447 83 429 88L352 103V160Q351 214 315 251Q278 287 224 288Q170 287 133 251Q97 214 96 160V103L48 93V158L64 237Q65 244 60 250Q56 256 48 256H16Q9 256 4 250Q-1 244 0 237L16 158V87Q1 81 0 64Q1 45 19 41L219 1ZM112 328Q129 323 141 336L212 412Q224 422 236 412L307 336Q319 323 336 328Q386 344 416 385Q447 426 448 481Q448 494 439 503Q430 512 417 512H31Q18 512 9 503Q0 494 0 481Q1 426 32 385Q62 344 112 328Z"/></svg>
<div class="ft"></div>
<span class="t" style="transform:scaleX(0.9350);transform-origin:0 50%;left:96.5px;top:131.44px;font-size:17.2px;color:#fff;-webkit-text-stroke:.25px #fff;">More info</span>
<svg class="ic" style="left:168.2px;top:131.2px;width:17.60px;height:17.6px" viewBox="0 0 512 512" ><path fill="#fff" d="M0 256Q1 326 34 384Q68 442 128 478Q189 512 256 512Q323 512 384 478Q444 442 478 384Q511 326 512 256Q511 186 478 128Q444 70 384 34Q323 0 256 0Q189 0 128 34Q68 70 34 128Q1 186 0 256ZM281 385Q264 399 247 385Q233 368 247 351L318 280H136Q114 278 112 256Q114 234 136 232H318L247 161Q233 144 247 127Q264 113 281 127L393 239Q407 256 393 273L281 385Z"/></svg>
</div>
<div class="box" style="left:314px;background:#23983f">
<span class="t" style="left:11.799999999999955px;top:17.76px;font-size:35.6px;color:#fff;font-weight:700;">1</span>
<span class="t" style="transform:scaleX(0.9524);transform-origin:0 50%;left:11.799999999999955px;top:73.44px;font-size:17.2px;color:#fff;-webkit-text-stroke:.25px #fff;">Total Staff</span>
<svg class="ic" style="left:169.0px;top:22.0px;width:95.00px;height:76px" viewBox="0 0 640 512" ><path fill="rgba(0,0,0,.15)" d="M96 224c35.300 0 64-28.700 64-64s-28.700-64-64-64-64 28.700-64 64 28.700 64 64 64zm448 0c35.300 0 64-28.700 64-64s-28.700-64-64-64-64 28.700-64 64 28.700 64 64 64zm32 32h-64c-17.600 0-33.500 7.100-45.100 18.600 40.300 22.100 68.900 62 75.100 109.400h66c17.700 0 32-14.300 32-32v-32c0-35.300-28.700-64-64-64zm-256 0c61.900 0 112-50.100 112-112S381.900 32 320 32 208 82.100 208 144s50.100 112 112 112zm76.800 32h-8.300c-20.800 10-43.900 16-68.500 16s-47.600-6-68.500-16h-8.300C179.600 288 128 339.600 128 403.200V432c0 26.500 21.500 48 48 48h288c26.500 0 48-21.500 48-48v-28.800c0-63.600-51.600-115.200-115.200-115.200zm-223.700-13.400C161.500 263.100 145.600 256 128 256H64c-35.300 0-64 28.700-64 64v32c0 17.700 14.300 32 32 32h65.900c6.300-47.400 34.900-87.300 75.200-109.400z"/></svg>
<div class="ft"></div>
<span class="t" style="transform:scaleX(0.9350);transform-origin:0 50%;left:96.5px;top:131.44px;font-size:17.2px;color:#fff;-webkit-text-stroke:.25px #fff;">More info</span>
<svg class="ic" style="left:168.2px;top:131.2px;width:17.60px;height:17.6px" viewBox="0 0 512 512" ><path fill="#fff" d="M0 256Q1 326 34 384Q68 442 128 478Q189 512 256 512Q323 512 384 478Q444 442 478 384Q511 326 512 256Q511 186 478 128Q444 70 384 34Q323 0 256 0Q189 0 128 34Q68 70 34 128Q1 186 0 256ZM281 385Q264 399 247 385Q233 368 247 351L318 280H136Q114 278 112 256Q114 234 136 232H318L247 161Q233 144 247 127Q264 113 281 127L393 239Q407 256 393 273L281 385Z"/></svg>
</div>
<div class="box" style="left:611.5px;background:#6f4fc0">
<span class="t" style="left:11.799999999999955px;top:17.76px;font-size:35.6px;color:#fff;font-weight:700;">1</span>
<span class="t" style="transform:scaleX(0.9316);transform-origin:0 50%;left:11.799999999999955px;top:73.44px;font-size:17.2px;color:#fff;-webkit-text-stroke:.25px #fff;">Total Course</span>
<svg class="ic" style="left:188px;top:26px;width:76px;height:70px" viewBox="0 0 76 70"><rect x="0" y="1" width="22" height="18" rx="3.500" fill="rgba(0,0,0,.15)"/><rect x="27" y="1" width="49" height="18" rx="3.500" fill="rgba(0,0,0,.15)"/><rect x="0" y="25" width="22" height="18" rx="3.500" fill="rgba(0,0,0,.15)"/><rect x="27" y="25" width="49" height="18" rx="3.500" fill="rgba(0,0,0,.15)"/><rect x="0" y="49" width="22" height="18" rx="3.500" fill="rgba(0,0,0,.15)"/><rect x="27" y="49" width="49" height="18" rx="3.500" fill="rgba(0,0,0,.15)"/></svg>
<div class="ft"></div>
<span class="t" style="transform:scaleX(0.9350);transform-origin:0 50%;left:96.5px;top:131.44px;font-size:17.2px;color:#fff;-webkit-text-stroke:.25px #fff;">More info</span>
<svg class="ic" style="left:168.2px;top:131.2px;width:17.60px;height:17.6px" viewBox="0 0 512 512" ><path fill="#fff" d="M0 256Q1 326 34 384Q68 442 128 478Q189 512 256 512Q323 512 384 478Q444 442 478 384Q511 326 512 256Q511 186 478 128Q444 70 384 34Q323 0 256 0Q189 0 128 34Q68 70 34 128Q1 186 0 256ZM281 385Q264 399 247 385Q233 368 247 351L318 280H136Q114 278 112 256Q114 234 136 232H318L247 161Q233 144 247 127Q264 113 281 127L393 239Q407 256 393 273L281 385Z"/></svg>
</div>
<div class="box" style="left:909px;background:#e64646">
<span class="t" style="left:11.799999999999955px;top:17.76px;font-size:35.6px;color:#fff;font-weight:700;">1</span>
<span class="t" style="transform:scaleX(0.9457);transform-origin:0 50%;left:11.799999999999955px;top:73.44px;font-size:17.2px;color:#fff;-webkit-text-stroke:.25px #fff;">Total Subjects</span>
<svg class="ic" style="left:197.75px;top:22.0px;width:66.50px;height:76px" viewBox="0 0 448 512" ><path fill="rgba(0,0,0,.15)" d="M448 360V24c0-13.300-10.700-24-24-24H96C43 0 0 43 0 96v320c0 53 43 96 96 96h328c13.300 0 24-10.700 24-24v-16c0-7.500-3.500-14.300-8.900-18.700-4.200-15.400-4.200-59.300 0-74.700 5.400-4.300 8.900-11.100 8.900-18.600zM128 134c0-3.300 2.700-6 6-6h212c3.300 0 6 2.700 6 6v20c0 3.300-2.700 6-6 6H134c-3.300 0-6-2.700-6-6v-20zm0 64c0-3.300 2.700-6 6-6h212c3.300 0 6 2.700 6 6v20c0 3.300-2.700 6-6 6H134c-3.300 0-6-2.700-6-6v-20zm253.400 250H96c-17.700 0-32-14.300-32-32 0-17.600 14.400-32 32-32h285.400c-1.900 17.100-1.900 46.900 0 64z"/></svg>
<div class="ft"></div>
<span class="t" style="transform:scaleX(0.9350);transform-origin:0 50%;left:96.5px;top:131.44px;font-size:17.2px;color:#fff;-webkit-text-stroke:.25px #fff;">More info</span>
<svg class="ic" style="left:168.2px;top:131.2px;width:17.60px;height:17.6px" viewBox="0 0 512 512" ><path fill="#fff" d="M0 256Q1 326 34 384Q68 442 128 478Q189 512 256 512Q323 512 384 478Q444 442 478 384Q511 326 512 256Q511 186 478 128Q444 70 384 34Q323 0 256 0Q189 0 128 34Q68 70 34 128Q1 186 0 256ZM281 385Q264 399 247 385Q233 368 247 351L318 280H136Q114 278 112 256Q114 234 136 232H318L247 161Q233 144 247 127Q264 113 281 127L393 239Q407 256 393 273L281 385Z"/></svg>
</div>
<div class="card" style="left:16.5px"><div class="hd"></div>
<span class="t" style="transform:scaleX(0.9528);transform-origin:0 50%;left:22.30000000000001px;top:15.46px;font-size:18.6px;color:#fff;-webkit-text-stroke:.25px #fff;">Staffs - Students Overview</span>
<div class="a" style="left:510px;top:26px;width:14px;height:2.600px;background:#f4f4f4"></div>
<svg class="ic" style="left:546.8px;top:21.3px;width:11px;height:11px" viewBox="0 0 12 12"><path d="M1.500 1.500L10.500 10.500M10.500 1.500L1.500 10.500" stroke="#fff" stroke-width="3" stroke-linecap="round"/></svg>
<div class="a" style="left:194.500px;top:88px;width:43px;height:11px;background:#09965b"></div>
<span class="t" style="left:245.0px;top:85.23px;font-size:13.2px;color:#707070;">Students</span>
<div class="a" style="left:308.500px;top:88px;width:42px;height:11px;background:#f79e12"></div>
<span class="t" style="left:357.5px;top:85.23px;font-size:13.2px;color:#707070;">Staff</span>
<div class="a" style="left:171.300px;top:112.300px;width:235.400px;height:235.400px;border-radius:50%;background:#f99f0f"></div>
<div class="a" style="left:287.700px;top:112.500px;width:2.600px;height:117px;background:#fdeccd"></div>
</div>
<div class="card" style="left:611px"><div class="hd"></div>
<span class="t" style="transform:scaleX(0.9592);transform-origin:0 50%;left:22.299999999999955px;top:15.46px;font-size:18.6px;color:#fff;-webkit-text-stroke:.25px #fff;">Attendance Per Subject</span>
<div class="a" style="left:510px;top:26px;width:14px;height:2.600px;background:#f4f4f4"></div>
<svg class="ic" style="left:546.8px;top:21.3px;width:11px;height:11px" viewBox="0 0 12 12"><path d="M1.500 1.500L10.500 10.500M10.500 1.500L1.500 10.500" stroke="#fff" stroke-width="3" stroke-linecap="round"/></svg>
<div class="a" style="left:194.500px;top:86.600px;width:44.500px;height:13px;background:#0b97bd"></div>
<span class="t" style="left:246px;top:85.23px;font-size:13.2px;color:#707070;">Attendance Per Subject</span>
<div class="a" style="left:52px;top:110.70px;width:502px;height:1px;background:#e9e9e9"></div>
<span class="t" style="right:527.7px;top:103.20px;font-size:13.200px;color:#6e6e6e">1.0</span>
<div class="a" style="left:52px;top:131.24px;width:502px;height:1px;background:#e9e9e9"></div>
<span class="t" style="right:527.7px;top:123.74px;font-size:13.200px;color:#6e6e6e">0.8</span>
<div class="a" style="left:52px;top:151.78px;width:502px;height:1px;background:#e9e9e9"></div>
<span class="t" style="right:527.7px;top:144.28px;font-size:13.200px;color:#6e6e6e">0.6</span>
<div class="a" style="left:52px;top:172.32px;width:502px;height:1px;background:#e9e9e9"></div>
<span class="t" style="right:527.7px;top:164.82px;font-size:13.200px;color:#6e6e6e">0.4</span>
<div class="a" style="left:52px;top:192.86px;width:502px;height:1px;background:#e9e9e9"></div>
<span class="t" style="right:527.7px;top:185.36px;font-size:13.200px;color:#6e6e6e">0.2</span>
<div class="a" style="left:52px;top:213.40px;width:502px;height:1px;background:#b9b9b9"></div>
<span class="t" style="right:527.7px;top:205.90px;font-size:13.200px;color:#6e6e6e">0</span>
<div class="a" style="left:52px;top:233.94px;width:502px;height:1px;background:#e9e9e9"></div>
<span class="t" style="right:527.7px;top:226.44px;font-size:13.200px;color:#6e6e6e">-0.2</span>
<div class="a" style="left:52px;top:254.48px;width:502px;height:1px;background:#e9e9e9"></div>
<span class="t" style="right:527.7px;top:246.98px;font-size:13.200px;color:#6e6e6e">-0.4</span>
<div class="a" style="left:52px;top:275.02px;width:502px;height:1px;background:#e9e9e9"></div>
<span class="t" style="right:527.7px;top:267.52px;font-size:13.200px;color:#6e6e6e">-0.6</span>
<div class="a" style="left:52px;top:295.56px;width:502px;height:1px;background:#e9e9e9"></div>
<span class="t" style="right:527.7px;top:288.06px;font-size:13.200px;color:#6e6e6e">-0.8</span>
<div class="a" style="left:52px;top:316.10px;width:502px;height:1px;background:#e9e9e9"></div>
<span class="t" style="right:527.7px;top:308.60px;font-size:13.200px;color:#6e6e6e">-1.0</span>
<div class="a" style="left:61.500px;top:111px;width:1px;height:216px;background:#c4c4c4"></div>
<div class="a" style="left:553.500px;top:111px;width:1px;height:216px;background:#e6e6e6"></div>
<span class="t" style="left:291px;top:327.83px;font-size:13.2px;color:#707070;">maths</span>
</div>
</div>
<div id="sbar"><div class="a" style="left:2px;top:18px;width:14px;height:284px;background:#c1c1c1"></div><svg class="ic" style="left:4.500px;top:7px;width:9px;height:5px" viewBox="0 0 9 5"><path d="M0 5L4.500 0L9 5z" fill="#a3a3a3"/></svg><svg class="ic" style="left:4px;top:673.300px;width:9px;height:5px" viewBox="0 0 9 5"><path d="M0 0L4.500 5L9 0z" fill="#505050"/></svg></div>
<svg class="ic" style="left:876px;top:575px;width:14px;height:22px;z-index:40" viewBox="0 0 14 22"><path d="M1 1V17L4.800 13.500L7.600 20L10 19L7.200 12.600H12.500z" fill="#fff" stroke="#222" stroke-width="1.100"/></svg>
</body></html>
